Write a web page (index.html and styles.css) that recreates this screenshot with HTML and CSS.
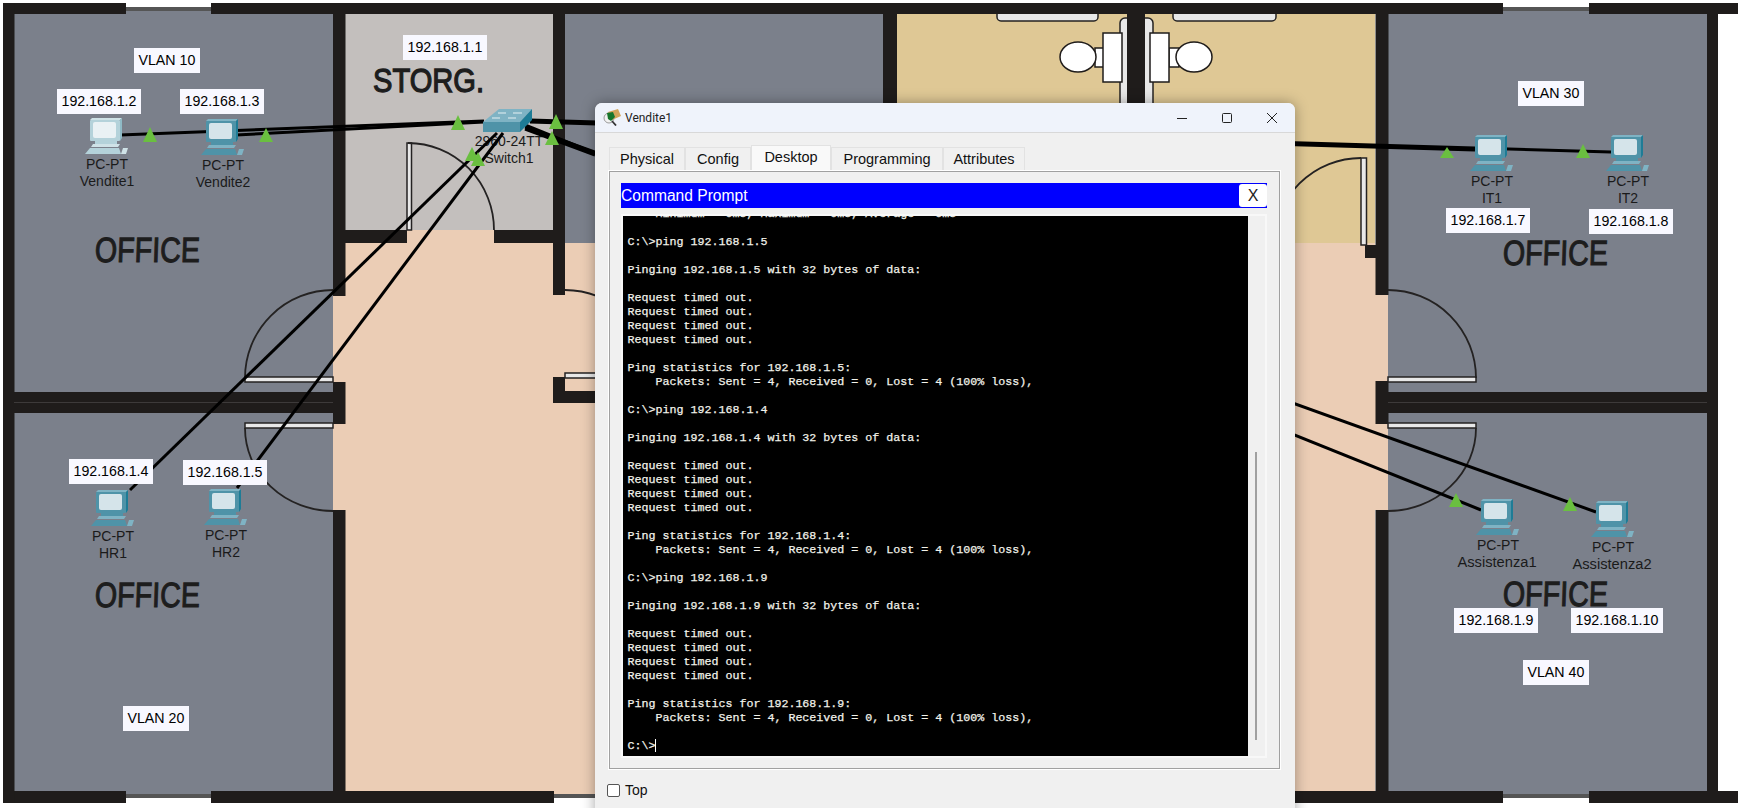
FILE: index.html
```html
<!DOCTYPE html>
<html lang="en">
<head>
    <meta charset="UTF-8">
    <meta name="viewport" content="width=device-width, initial-scale=1.0">
    <title>Vendite1 - Command Prompt</title>
    <link rel="stylesheet" href="styles.css">
</head>
<body>
    <!-- Shared icons -->
    <svg class="defs" width="0" height="0">
        <symbol id="pc" viewBox="0 0 44 38">
            <path class="pc-top" d="M5 2 L7 0 L37 0 L35 2 Z"/>
            <path class="pc-side" d="M35 2 L37 0 L37 20 L35 23 Z"/>
            <rect class="pc-frame" x="5" y="2" width="30" height="21" rx="1"/>
            <rect class="pc-screen" x="8" y="4" width="23" height="16" rx="2"/>
            <path class="pc-frame" d="M10 23 L32 23 L32 26 L10 26 Z"/>
            <path class="pc-top" d="M8 26 L35 26 L33 29 L6 29 Z"/>
            <path class="pc-frame" d="M5 30 L34 30 L36 36 L0 36 Z"/>
            <path class="pc-top" d="M38 30 L43 30 L41 36 L36 36 Z"/>
        </symbol>
    </svg>

    <div class="canvas">
        <!-- Floor plan -->
        <svg class="layer" width="1738" height="808" viewBox="0 0 1738 808">
            <g class="grey">
                <rect x="14" y="11" width="319" height="381"/>
                <rect x="14" y="413" width="319" height="381"/>
                <rect x="565" y="14" width="318" height="376"/>
                <rect x="1388" y="11" width="319" height="381"/>
                <rect x="1388" y="413" width="319" height="381"/>
            </g>
            <rect class="store" x="345" y="14" width="208" height="216"/>
            <rect class="tan" x="897" y="14" width="478" height="231"/>
            <g class="peach">
                <rect x="345" y="243" width="1030" height="551"/>
                <rect x="407" y="230" width="87" height="13"/>
                <rect x="333" y="296" width="12" height="214"/>
                <rect x="553" y="295" width="12" height="82"/>
                <rect x="1375" y="245" width="13" height="265"/>
            </g>

            <!-- window frames in the outer wall -->
            <g class="frame">
                <rect x="126" y="7" width="85" height="4"/>
                <rect x="1503" y="7" width="86" height="4"/>
                <rect x="126" y="794" width="85" height="4"/>
                <rect x="554" y="794" width="949" height="4"/>
                <rect x="1503" y="794" width="86" height="4"/>
            </g>

            <!-- toilets -->
            <rect class="panel" x="1120" y="18" width="33" height="90" rx="5"/>
            <rect class="panel" x="997" y="10" width="101" height="11" rx="4"/>
            <rect class="panel" x="1173" y="10" width="103" height="11" rx="4"/>
            <g class="fixture">
                <rect x="1095" y="48" width="10" height="19"/>
                <rect x="1169" y="48" width="10" height="19"/>
                <rect x="1103" y="33" width="19" height="49"/>
                <rect x="1150" y="33" width="19" height="49"/>
                <ellipse cx="1078" cy="57" rx="18" ry="15"/>
                <ellipse cx="1194" cy="57" rx="18" ry="15"/>
            </g>

            <g class="wall">
                <rect x="3" y="3" width="123" height="11"/>
                <rect x="211" y="3" width="1292" height="11"/>
                <rect x="1589" y="3" width="149" height="11"/>
                <rect x="3" y="791" width="123" height="12"/>
                <rect x="211" y="791" width="343" height="12"/>
                <rect x="1250" y="791" width="253" height="12"/>
                <rect x="1589" y="791" width="149" height="12"/>
                <rect x="3" y="3" width="11.5" height="800"/>
                <rect x="333" y="14" width="12.5" height="282"/>
                <rect x="333" y="382" width="12.5" height="42"/>
                <rect x="333" y="510" width="12.5" height="281"/>
                <rect x="14" y="392" width="319" height="21"/>
                <rect x="345" y="230" width="62" height="13"/>
                <rect x="494" y="230" width="59" height="13"/>
                <rect x="553" y="14" width="12" height="281"/>
                <rect x="553" y="377" width="12" height="26"/>
                <rect x="553" y="391" width="45" height="12"/>
                <rect x="883" y="14" width="14" height="231"/>
                <rect x="1127" y="14" width="18" height="100"/>
                <rect x="1375.5" y="14" width="13" height="281"/>
                <rect x="1375.5" y="381" width="13" height="43"/>
                <rect x="1375.5" y="510" width="13" height="281"/>
                <rect x="1365" y="245" width="11" height="13"/>
                <rect x="1388" y="392" width="319" height="21"/>
                <rect x="1707" y="14" width="11" height="777"/>
            </g>
            <g class="seam">
                <rect x="14" y="402" width="319" height="1"/>
                <rect x="1388" y="402" width="319" height="1"/>
            </g>

            <!-- doors -->
            <g class="panel">
                <rect x="245" y="377" width="88" height="5"/>
                <rect x="245" y="423" width="88" height="5"/>
                <rect x="407" y="143" width="4.5" height="87"/>
                <rect x="565" y="373" width="40" height="5"/>
                <rect x="1388" y="377" width="88" height="5"/>
                <rect x="1388" y="423" width="88" height="5"/>
                <rect x="1361" y="158" width="5.5" height="87"/>
            </g>
            <g class="arc">
                <path d="M245 378 A88 88 0 0 1 333 290"/>
                <path d="M245 428 A88 83 0 0 0 333 511"/>
                <path d="M408 143 A86 87 0 0 1 494 230"/>
                <path d="M565 290 A88 88 0 0 1 653 378"/>
                <path d="M1388 290 A88 88 0 0 1 1476 378"/>
                <path d="M1476 428 A88 83 0 0 1 1388 511"/>
                <path d="M1361 158 A87 87 0 0 0 1274 245"/>
            </g>

            <g class="room-name">
                <text x="95" y="262" textLength="105" lengthAdjust="spacingAndGlyphs">OFFICE</text>
                <text x="95" y="607" textLength="105" lengthAdjust="spacingAndGlyphs">OFFICE</text>
                <text x="1503" y="265" textLength="105" lengthAdjust="spacingAndGlyphs">OFFICE</text>
                <text x="1503" y="606" textLength="105" lengthAdjust="spacingAndGlyphs">OFFICE</text>
                <text class="room-store" x="373" y="92" textLength="111" lengthAdjust="spacingAndGlyphs">STORG.</text>
            </g>
        </svg>

        <!-- Switch label sits under the cables -->
        <div class="switch-label">
            <span>2960-24TT</span>
            <span>Switch1</span>
        </div>

        <!-- Cables -->
        <svg class="layer" width="1738" height="808" viewBox="0 0 1738 808">
            <g class="cable">
                <path d="M120 135 L484 121"/>
                <path d="M236 135 L484 122"/>
                <path d="M497 133 L130 490"/>
                <path d="M503 133 L237 488"/>
                <path d="M530 120 L1611 152"/>
                <path d="M530 122 L1475 150"/>
                <path d="M525 127 L1596 512"/>
                <path d="M525 125 L1481 510"/>
                <path d="M525 129 L595 155"/>
            </g>
            <!-- switch -->
            <path class="sw-front" d="M483 122 L520 122 L520 132 L483 132 Z"/>
            <path class="sw-top" d="M483 122 L499 109 L532 109 L520 122 Z"/>
            <path class="sw-side" d="M520 122 L532 109 L532 120 L520 132 Z"/>
            <path class="sw-mark" d="M498 113 L506 113 M513 113 L522 113 M492 118 L500 118 M508 118 L516 118"/>
            <g class="link">
                <path d="M150 127 L157 142 L143 142 Z"/>
                <path d="M266 128 L273 142 L259 142 Z"/>
                <path d="M458 115 L465 130 L451 130 Z"/>
                <path d="M556 114 L563 129 L549 129 Z"/>
                <path d="M552 131 L559 145 L545 145 Z"/>
                <path d="M472 147 L479 161 L465 161 Z"/>
                <path d="M478 152 L485 166 L471 166 Z"/>
                <path d="M1447 147 L1454 158 L1440 158 Z"/>
                <path d="M1583 144 L1590 158 L1576 158 Z"/>
                <path d="M1456 493 L1463 507 L1449 507 Z"/>
                <path d="M1570 497 L1577 511 L1563 511 Z"/>
            </g>
        </svg>

        <!-- PCs -->
        <div class="node node-v1 pc-light">
            <svg class="pc" width="44" height="38"><use href="#pc"/></svg>
            <span>PC-PT</span>
            <span>Vendite1</span>
        </div>
        <div class="node node-v2">
            <svg class="pc" width="44" height="38"><use href="#pc"/></svg>
            <span>PC-PT</span>
            <span>Vendite2</span>
        </div>
        <div class="node node-hr1">
            <svg class="pc" width="44" height="38"><use href="#pc"/></svg>
            <span>PC-PT</span>
            <span>HR1</span>
        </div>
        <div class="node node-hr2">
            <svg class="pc" width="44" height="38"><use href="#pc"/></svg>
            <span>PC-PT</span>
            <span>HR2</span>
        </div>
        <div class="node node-it1">
            <svg class="pc" width="44" height="38"><use href="#pc"/></svg>
            <span>PC-PT</span>
            <span>IT1</span>
        </div>
        <div class="node node-it2">
            <svg class="pc" width="44" height="38"><use href="#pc"/></svg>
            <span>PC-PT</span>
            <span>IT2</span>
        </div>
        <div class="node node-as1">
            <svg class="pc" width="44" height="38"><use href="#pc"/></svg>
            <span>PC-PT</span>
            <span class="node-long">Assistenza1</span>
        </div>
        <div class="node node-as2">
            <svg class="pc" width="44" height="38"><use href="#pc"/></svg>
            <span>PC-PT</span>
            <span class="node-long">Assistenza2</span>
        </div>

        <!-- Notes -->
        <div class="tag tag-vlan10">VLAN 10</div>
        <div class="tag tag-vlan20">VLAN 20</div>
        <div class="tag tag-vlan30">VLAN 30</div>
        <div class="tag tag-vlan40">VLAN 40</div>
        <div class="tag tag-ip1">192.168.1.1</div>
        <div class="tag tag-ip2">192.168.1.2</div>
        <div class="tag tag-ip3">192.168.1.3</div>
        <div class="tag tag-ip4">192.168.1.4</div>
        <div class="tag tag-ip5">192.168.1.5</div>
        <div class="tag tag-ip7">192.168.1.7</div>
        <div class="tag tag-ip8">192.168.1.8</div>
        <div class="tag tag-ip9">192.168.1.9</div>
        <div class="tag tag-ip10">192.168.1.10</div>

        <!-- Device window -->
        <div class="window">
            <div class="titlebar">
                <svg class="app-icon" width="18" height="17" viewBox="0 0 18 17">
                    <circle cx="6" cy="9" r="5" fill="#f2f2f2" stroke="#9a9a9a"/>
                    <path d="M9 12 L13 16.5" stroke="#333" stroke-width="1.8"/>
                    <path d="M5 3 L15 0 L18 7 L9 11 Z" fill="#d2a45a"/>
                    <path d="M4 4 L10 3 L12 8 L8 12 L5 10 Z" fill="#17762c"/>
                </svg>
                <span class="window-title">Vendite1</span>
                <div class="controls">
                    <svg width="12" height="12" viewBox="0 0 12 12"><path d="M1 6.5 H11" stroke="#222"/></svg>
                    <svg width="12" height="12" viewBox="0 0 12 12"><rect x="1.5" y="1.5" width="9" height="9" rx="1" fill="none" stroke="#222"/></svg>
                    <svg width="12" height="12" viewBox="0 0 12 12"><path d="M1 1 L11 11 M11 1 L1 11" stroke="#222"/></svg>
                </div>
            </div>

            <div class="window-body">
                <div class="tabs">
                    <a class="tab tab-physical">Physical</a>
                    <a class="tab tab-config">Config</a>
                    <a class="tab tab-desktop active">Desktop</a>
                    <a class="tab tab-programming">Programming</a>
                    <a class="tab tab-attributes">Attributes</a>
                </div>

                <div class="pane">
                    <div class="prompt-bar">
                        <span>Command Prompt</span>
                        <button class="prompt-close">X</button>
                    </div>
                    <div class="terminal">
                        <div class="terminal-screen">
<pre class="terminal-text">    Minimum = 0ms, Maximum = 0ms, Average = 0ms

C:\&gt;ping 192.168.1.5

Pinging 192.168.1.5 with 32 bytes of data:

Request timed out.
Request timed out.
Request timed out.
Request timed out.

Ping statistics for 192.168.1.5:
    Packets: Sent = 4, Received = 0, Lost = 4 (100% loss),

C:\&gt;ping 192.168.1.4

Pinging 192.168.1.4 with 32 bytes of data:

Request timed out.
Request timed out.
Request timed out.
Request timed out.

Ping statistics for 192.168.1.4:
    Packets: Sent = 4, Received = 0, Lost = 4 (100% loss),

C:\&gt;ping 192.168.1.9

Pinging 192.168.1.9 with 32 bytes of data:

Request timed out.
Request timed out.
Request timed out.
Request timed out.

Ping statistics for 192.168.1.9:
    Packets: Sent = 4, Received = 0, Lost = 4 (100% loss),

C:\&gt;<span class="cursor"></span></pre>
                        </div>
                        <div class="scrollbar"><div class="scroll-thumb"></div></div>
                    </div>
                </div>

                <label class="top-check">
                    <span class="checkbox"></span>
                    Top
                </label>
            </div>
        </div>
    </div>
</body>
</html>
```

FILE: styles.css
```css
body {
    font-family: "Liberation Sans", Arial, sans-serif;
    margin: 0;
    padding: 0;
    background-color: #fff;
    overflow: hidden;
}

.defs {
    position: absolute;
}

.canvas {
    position: relative;
    width: 1738px;
    height: 808px;
    overflow: hidden;
}

.layer {
    position: absolute;
    left: 0;
    top: 0;
}

/* Floor plan */
.grey { fill: #7b808b; }
.store { fill: #c3bfbd; }
.tan { fill: #dfc895; }
.peach { fill: #ebcdb5; }
.wall { fill: #1f1c1b; }
.seam { fill: #3d3a3a; }
.frame { fill: #555; }

.panel {
    fill: #e8e8e8;
    stroke: #242222;
    stroke-width: 1.5;
}

.fixture {
    fill: #fff;
    stroke: #1f1c1b;
    stroke-width: 1.5;
}

.arc {
    fill: none;
    stroke: #242222;
    stroke-width: 1.8;
}

.room-name text {
    font-size: 35px;
    fill: #1d1d1d;
    stroke: #1d1d1d;
    stroke-width: 1.1;
    transform-box: fill-box;
    transform-origin: center;
    transform: skewX(-2deg);
}

.room-name .room-store {
    font-size: 34px;
    stroke-width: 1.3;
    transform: none;
}

/* Cables */
.cable {
    fill: none;
    stroke: #000;
    stroke-width: 3;
}

.link { fill: #6abf40; }
.sw-front { fill: #4f93a8; }
.sw-top { fill: #7fb3c4; }
.sw-side { fill: #1e7c96; }

.sw-mark {
    fill: none;
    stroke: #e6f0f3;
    stroke-width: 1;
}

/* Devices */
.node,
.switch-label {
    position: absolute;
    display: flex;
    flex-direction: column;
    align-items: center;
    width: 44px;
    font-size: 14px;
    line-height: 17px;
    color: #1a1a1a;
    white-space: nowrap;
}

.switch-label {
    left: 487px;
    top: 133px;
}

.node-v1 { left: 85px; top: 118px; }
.node-v2 { left: 201px; top: 119px; }
.node-hr1 { left: 91px; top: 490px; }
.node-hr2 { left: 204px; top: 489px; }
.node-it1 { left: 1470px; top: 135px; }
.node-it2 { left: 1606px; top: 135px; }
.node-as1 { left: 1476px; top: 499px; }
.node-as2 { left: 1591px; top: 501px; }

.node-long {
    margin-right: 2px;
    font-size: 14.7px;
}

.pc {
    display: block;
    --frame: #4f93a8;
    --side: #1e7c96;
    --top: #7fb3c4;
    --screen: #d5e4ea;
}

.pc-light .pc {
    --frame: #b4d2da;
    --side: #8fbac6;
    --top: #cfe2e7;
    --screen: #e9f1f4;
}

.pc-frame { fill: var(--frame); }
.pc-side { fill: var(--side); }
.pc-top { fill: var(--top); }
.pc-screen { fill: var(--screen); }

/* Notes */
.tag {
    position: absolute;
    height: 25px;
    padding: 0 4.5px;
    background: #f8f8ff;
    color: #000;
    font-size: 14.2px;
    line-height: 25px;
    white-space: nowrap;
}

.tag-vlan10 { left: 134px; top: 48px; }
.tag-vlan20 { left: 123px; top: 706px; }
.tag-vlan30 { left: 1518px; top: 81px; }
.tag-vlan40 { left: 1523px; top: 660px; }
.tag-ip1 { left: 403px; top: 35px; }
.tag-ip2 { left: 57px; top: 89px; }
.tag-ip3 { left: 180px; top: 89px; }
.tag-ip4 { left: 69px; top: 459px; }
.tag-ip5 { left: 183px; top: 460px; }
.tag-ip7 { left: 1446px; top: 208px; }
.tag-ip8 { left: 1589px; top: 209px; }
.tag-ip9 { left: 1454px; top: 608px; }
.tag-ip10 { left: 1571px; top: 608px; }

/* Device window */
.window {
    position: absolute;
    left: 595px;
    top: 103px;
    width: 700px;
    height: 720px;
    display: flex;
    flex-direction: column;
    background: #f0f0f0;
    border-radius: 7px 7px 0 0;
    box-shadow: 0 0 14px rgba(0, 0, 0, 0.35);
    overflow: hidden;
}

.titlebar {
    display: flex;
    align-items: center;
    height: 30px;
    padding-left: 8px;
    background: #eff3fb;
    border-bottom: 1px solid #d8d8d8;
    box-sizing: border-box;
    font-family: Roboto, sans-serif;
    font-size: 12px;
    color: #222;
}

.window-title {
    margin-left: 4px;
}

.controls {
    display: flex;
    gap: 33px;
    margin-left: auto;
    margin-right: 17px;
}

.controls svg {
    display: block;
}

.window-body {
    display: flex;
    flex-direction: column;
    padding: 12px 15px 0 14px;
}

.tabs {
    display: flex;
    align-items: flex-end;
    height: 26px;
}

.tab {
    display: block;
    box-sizing: border-box;
    height: 24px;
    border: 1px solid #e2e2e2;
    border-bottom: none;
    background: #f0f0f0;
    font-size: 14.5px;
    line-height: 23px;
    text-align: center;
    color: #111;
}

.tab-physical { width: 76px; }
.tab-config { width: 66px; }
.tab-desktop { width: 80px; }
.tab-programming { width: 112px; }
.tab-attributes { width: 82px; }

.tab.active {
    height: 26px;
    background: #f9f9f9;
}

.pane {
    box-sizing: border-box;
    height: 598px;
    padding: 11px 12px 11px 11px;
    border: 1px solid #a0a0a0;
    outline: 1px solid #fff;
}

.prompt-bar {
    display: flex;
    align-items: center;
    justify-content: space-between;
    height: 25px;
    background: #00f;
    color: #fff;
    font-size: 15.6px;
}

.prompt-close {
    width: 28px;
    height: 23px;
    padding: 0;
    border: none;
    border-radius: 3px;
    background: #fff;
    color: #222;
    font-family: inherit;
    font-size: 16px;
}

.terminal {
    display: flex;
    box-sizing: border-box;
    height: 544px;
    margin-top: 6px;
    padding: 2px;
    background: #f8f8f8;
}

.terminal-screen {
    display: flex;
    flex-direction: column;
    justify-content: flex-end;
    box-sizing: border-box;
    width: 625px;
    padding: 0 0 3px 4.5px;
    background: #000;
    overflow: hidden;
}

.terminal-text {
    margin: 0;
    font-family: "Liberation Mono", "Courier New", monospace;
    font-size: 11.67px;
    line-height: 14px;
    color: #f2f2ea;
    -webkit-text-stroke: 0.25px #f2f2ea;
}

.cursor {
    display: inline-block;
    width: 1px;
    height: 13px;
    margin-bottom: -3px;
    background: #fff;
}

.scrollbar {
    position: relative;
    flex: 1;
    background: #f0f0f0;
}

.scroll-thumb {
    position: absolute;
    left: 7px;
    bottom: 16px;
    width: 2px;
    height: 288px;
    background: #a0a0a0;
}

.top-check {
    display: flex;
    align-items: center;
    gap: 5px;
    margin-top: 13px;
    margin-left: -2px;
    font-size: 14px;
    color: #111;
}

.checkbox {
    box-sizing: border-box;
    width: 13px;
    height: 13px;
    border: 1px solid #555;
    border-radius: 2px;
    background: #fff;
}
```
